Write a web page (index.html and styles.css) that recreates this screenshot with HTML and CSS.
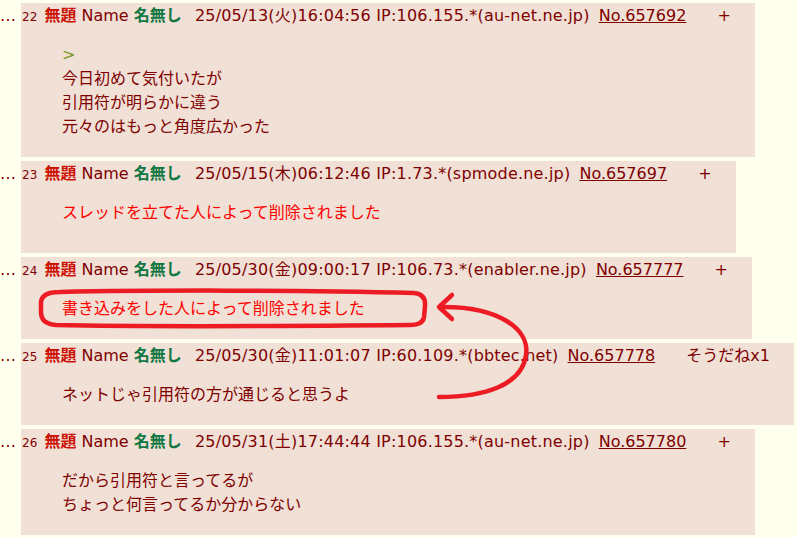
FILE: index.html
```html
<!DOCTYPE html>
<html lang="ja">
<head>
  <meta charset="UTF-8" />
  <title>スレッド</title>
  <link rel="stylesheet" href="styles.css">
</head>
<body>
  <div class="thread">

    <div class="row">
      <div class="rts">…</div>
      <div class="rtd">
        <div class="head">
          <span class="rsc">22</span>
          <span class="csb">無題</span>
          Name <span class="cnm">名無し</span>
          <span class="cnw">25/05/13(火)16:04:56 IP:106.155.*(au-net.ne.jp)</span>
          <a class="cno" href="#">No.657692</a>
          <a class="del" href="#">+</a>
        </div>
        <blockquote>
          <span class="quote">&gt;</span><br>
          今日初めて気付いたが<br>
          引用符が明らかに違う<br>
          元々のはもっと角度広かった
        </blockquote>
      </div>
    </div>

    <div class="row">
      <div class="rts">…</div>
      <div class="rtd tall">
        <div class="head">
          <span class="rsc">23</span>
          <span class="csb">無題</span>
          Name <span class="cnm">名無し</span>
          <span class="cnw">25/05/15(木)06:12:46 IP:1.73.*(spmode.ne.jp)</span>
          <a class="cno" href="#">No.657697</a>
          <a class="del" href="#">+</a>
        </div>
        <blockquote class="deleted">スレッドを立てた人によって削除されました</blockquote>
      </div>
    </div>

    <div class="row">
      <div class="rts">…</div>
      <div class="rtd">
        <div class="head">
          <span class="rsc">24</span>
          <span class="csb">無題</span>
          Name <span class="cnm">名無し</span>
          <span class="cnw">25/05/30(金)09:00:17 IP:106.73.*(enabler.ne.jp)</span>
          <a class="cno" href="#">No.657777</a>
          <a class="del" href="#">+</a>
        </div>
        <blockquote class="deleted">書き込みをした人によって削除されました</blockquote>
      </div>
    </div>

    <div class="row">
      <div class="rts">…</div>
      <div class="rtd">
        <div class="head">
          <span class="rsc">25</span>
          <span class="csb">無題</span>
          Name <span class="cnm">名無し</span>
          <span class="cnw">25/05/30(金)11:01:07 IP:60.109.*(bbtec.net)</span>
          <a class="cno" href="#">No.657778</a>
          <a class="sod" href="#">そうだねx1</a>
        </div>
        <blockquote>ネットじゃ引用符の方が通じると思うよ</blockquote>
      </div>
    </div>

    <div class="row">
      <div class="rts">…</div>
      <div class="rtd">
        <div class="head">
          <span class="rsc">26</span>
          <span class="csb">無題</span>
          Name <span class="cnm">名無し</span>
          <span class="cnw">25/05/31(土)17:44:44 IP:106.155.*(au-net.ne.jp)</span>
          <a class="cno" href="#">No.657780</a>
          <a class="del" href="#">+</a>
        </div>
        <blockquote>
          だから引用符と言ってるが<br>
          ちょっと何言ってるか分からない
        </blockquote>
      </div>
    </div>

  </div>

  <!-- hand drawn marks on top of the screenshot -->
  <svg class="marks" width="797" height="537" viewBox="0 0 797 537">
    <path d="M60,292 C150,290 300,290 414,293 Q426,294 425,306 L424,317 Q423,325 410,325 C300,326 150,327 56,325 Q41,324 41,312 L41,303 Q41,292 60,292 Z" />
    <path d="M439,397 C485,397 522,385 526,355 C530,330 500,306 440,307" />
    <path d="M452,295 L439,307 L452,319" />
  </svg>
</body>
</html>
```

FILE: styles.css
```css
body {
  margin: 0;
  padding-top: 3px;
  background: #ffffee;
  color: #800000;
  font-family: "DejaVu Sans", "Noto Sans CJK JP", sans-serif;
  font-size: 16px;
  position: relative;
  overflow: hidden;
  height: 537px;
}
.thread {
  display: flex;
  flex-direction: column;
  gap: 4px;
}
.row {
  display: flex;
  align-items: flex-start;
}
.rts {
  width: 21px;
  flex-shrink: 0;
  height: 22px;
  line-height: 22px;
  padding-top: 2px;
  font-size: 16px;
  overflow: hidden;
}
.rtd {
  background: #f0e0d6;
  padding: 2px 24px 2px 1px;
  white-space: nowrap;
}
.rtd.tall {
  padding-bottom: 12px;
}
.head {
  height: 22px;
  line-height: 22px;
}
.rsc {
  font-size: 12px;
}
.csb {
  color: #cc1105;
  font-weight: bold;
  margin-left: 2px;
}
.cnm {
  color: #117743;
  font-weight: bold;
}
.cnw {
  margin-left: 8px;
  letter-spacing: 0.2px;
}
.cno {
  color: #800000;
  margin-left: 4px;
}
.del, .sod {
  color: #800000;
  text-decoration: none;
  margin-left: 26px;
}
blockquote {
  margin: 16px 40px;
  line-height: 24px;
}
.quote {
  color: #789922;
}
.deleted {
  color: #ff0000;
  height: 24px;
}
.marks {
  position: absolute;
  left: 0;
  top: 0;
  pointer-events: none;
  fill: none;
  stroke: #ed1c24;
  stroke-width: 4.5;
  stroke-linecap: round;
  stroke-linejoin: round;
}
```
